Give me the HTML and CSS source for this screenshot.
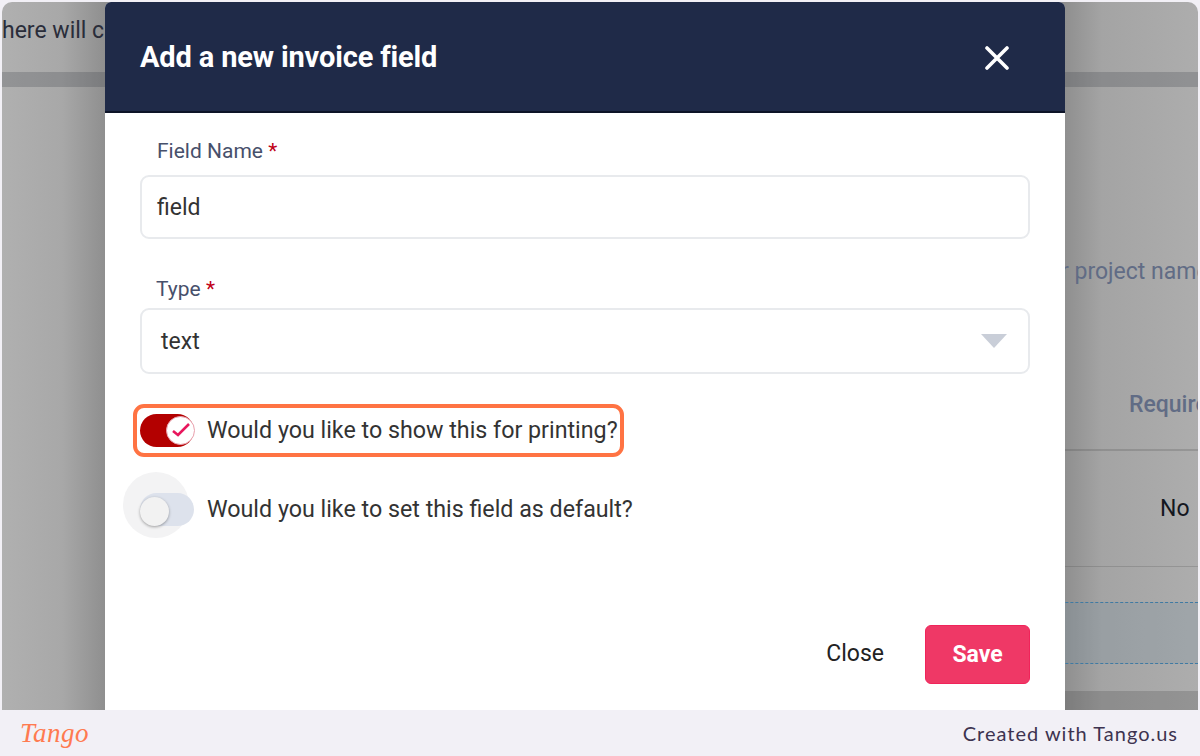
FILE: index.html
```html
<!DOCTYPE html>
<html lang="en">
<head>
    <meta charset="UTF-8">
    <title>Add a new invoice field</title>
    <link rel="stylesheet" href="styles.css">
</head>
<body>
    <div class="shot">
        <div class="page">
            <p class="page-intro">here will c</p>
            <div class="page-band"></div>
            <p class="page-project">r project name</p>
            <div class="page-head">Required</div>
            <div class="page-row"><span>No</span></div>
            <div class="page-drop"></div>
            <div class="page-end"></div>
        </div>

        <section class="modal">
            <header class="modal-header">
                <h2>Add a new invoice field</h2>
                <svg class="close-icon" viewBox="0 0 24 24" width="24" height="24">
                    <path d="M2 2 L22 22 M22 2 L2 22" />
                </svg>
            </header>

            <div class="modal-body">
                <label class="field-label">Field Name <span class="req">*</span></label>
                <div class="input">field</div>

                <label class="field-label type-label">Type <span class="req">*</span></label>
                <div class="input select">
                    <span>text</span>
                    <span class="caret"></span>
                </div>

                <div class="switch-row print-row">
                    <span class="switch on">
                        <span class="thumb">
                            <svg viewBox="0 0 24 24" width="24" height="24">
                                <path d="M4 13 L9 17 L20 6" />
                            </svg>
                        </span>
                    </span>
                    <span>Would you like to show this for printing?</span>
                    <span class="highlight"></span>
                </div>

                <div class="switch-row default-row">
                    <span class="switch">
                        <span class="halo"></span>
                        <span class="thumb"></span>
                    </span>
                    <span>Would you like to set this field as default?</span>
                </div>

                <div class="modal-actions">
                    <button class="btn-close">Close</button>
                    <button class="btn-save">Save</button>
                </div>
            </div>
        </section>
    </div>

    <footer class="tango-bar">
        <span class="tango-logo">Tango</span>
        <span class="tango-credit">Created with Tango.us</span>
    </footer>
</body>
</html>
```

FILE: styles.css
```css
* {
    box-sizing: border-box;
}

body {
    margin: 0;
    width: 1200px;
    height: 756px;
    overflow: hidden;
    background-color: #f2f0f6;
    font-family: Roboto, "Liberation Sans", sans-serif;
}

.shot {
    position: relative;
    height: 708px;
    margin: 2px 2px 0;
    border-radius: 10px 10px 0 0;
    overflow: hidden;
    background: linear-gradient(90deg, #b0b0b0 0, #a8a8a8 60px, #8f8f8f 103px, #8f8f8f 1063px, #a4a4a4 1100px, #adadad 1196px);
}

/* page behind the modal */
.page {
    height: 100%;
    display: flex;
    flex-direction: column;
}

.page-intro {
    margin: 0;
    height: 70px;
    padding-top: 15px;
    font-size: 23px;
    line-height: 28px;
    color: #2a2d3a;
    white-space: nowrap;
}

.page-band {
    height: 15px;
    background-color: rgba(60, 65, 70, 0.25);
}

.page-project {
    margin: 171px 0 0 1059px;
    height: 28px;
    font-size: 23px;
    line-height: 28px;
    color: #616c85;
    white-space: nowrap;
}

.page-head {
    margin: 105px 0 0 1127px;
    height: 58px;
    font-size: 23px;
    font-weight: 500;
    line-height: 28px;
    color: #616c85;
    white-space: nowrap;
}

/* the table only shows to the right of the modal */
.page-row {
    height: 118px;
    margin-left: 500px;
    border-top: 2px solid rgba(60, 60, 60, 0.2);
    border-bottom: 1px solid rgba(60, 60, 60, 0.2);
    padding: 44px 0 0 658px;
    font-size: 23px;
    line-height: 28px;
    color: #14171f;
}

.page-drop {
    height: 62px;
    margin: 35px 0 0 500px;
    background-color: rgba(120, 145, 160, 0.25);
    border-top: 1px dashed #3f7aa3;
    border-bottom: 1px dashed #3f7aa3;
}

.page-end {
    flex: 1;
    margin: 27px 0 0 500px;
    background-color: rgba(60, 60, 60, 0.22);
}

/* modal */
.modal {
    position: absolute;
    left: 103px;
    top: 0;
    width: 960px;
    height: 708px;
    background-color: #fff;
    border-radius: 6px 6px 0 0;
    overflow: hidden;
}

.modal-header {
    height: 111px;
    padding: 0 56px 0 35px;
    display: flex;
    align-items: center;
    justify-content: space-between;
    background-color: #1f2a48;
    border-bottom: 2px solid #0d1428;
    color: #fff;
}

.modal-header h2 {
    margin: 0;
    font-size: 29px;
    font-weight: 700;
    letter-spacing: -0.15px;
}

.close-icon {
    margin-top: 2px;
}

.close-icon path {
    fill: none;
    stroke: #fff;
    stroke-width: 3.6;
    stroke-linecap: round;
}

.modal-body {
    padding: 23px 35px 0;
}

.field-label {
    display: block;
    padding-left: 17px;
    height: 39px;
    font-size: 21px;
    line-height: 30px;
    color: #47506b;
}

.type-label {
    margin-top: 35px;
    padding-left: 16px;
    height: 34px;
}

.req {
    color: #c00018;
}

.input {
    height: 64px;
    padding: 0 15px;
    display: flex;
    align-items: center;
    border: 2px solid #e8eaed;
    border-radius: 9px;
    font-size: 23px;
    color: #333;
}

.select {
    height: 66px;
    padding: 0 21px 0 19px;
    justify-content: space-between;
}

.caret {
    width: 0;
    height: 0;
    border-left: 13px solid transparent;
    border-right: 13px solid transparent;
    border-top: 14px solid #c9ced8;
}

.switch-row {
    position: relative;
    display: flex;
    align-items: center;
    gap: 13px;
    font-size: 23.25px;
    color: #333;
    white-space: nowrap;
}

.print-row {
    margin-top: 39px;
    height: 34px;
}

.default-row {
    margin-top: 45px;
    height: 34px;
}

.switch {
    position: relative;
    flex: none;
    width: 54px;
    height: 33px;
    border-radius: 17px;
    background-color: #dde2ec;
}

.switch.on {
    background-color: #b30000;
}

.thumb {
    position: absolute;
    left: 0;
    top: 4px;
    width: 29px;
    height: 29px;
    border-radius: 50%;
    background-color: #f2f2f2;
    box-shadow: 0 1px 3px rgba(0, 0, 0, 0.35);
}

.switch.on .thumb {
    left: 26px;
    top: 2px;
    background-color: #fff;
    display: flex;
    align-items: center;
    justify-content: center;
    box-shadow: none;
    border: 1px solid #e9a0ad;
}

.thumb path {
    fill: none;
    stroke: #e8175d;
    stroke-width: 2.6;
}

.halo {
    position: absolute;
    left: -17px;
    top: -21px;
    width: 66px;
    height: 66px;
    border-radius: 50%;
    background-color: #f3f3f4;
}

.default-row .switch {
    background: none;
}

.default-row .switch::before {
    content: "";
    position: absolute;
    inset: 0;
    z-index: 1;
    border-radius: 17px;
    background-color: #dde2ec;
}

.default-row .thumb {
    z-index: 2;
}

.default-row > span:last-child {
    position: relative;
}

.highlight {
    position: absolute;
    left: -7px;
    top: -9px;
    width: 491px;
    height: 53px;
    border: 4px solid #ff7343;
    border-radius: 11px;
}

.modal-actions {
    margin-top: 99px;
    display: flex;
    justify-content: flex-end;
    align-items: center;
    gap: 41px;
}

.modal-actions button {
    font-family: inherit;
    border: 0;
    background: none;
    padding: 0;
    cursor: pointer;
}

.modal-actions .btn-close {
    margin-bottom: 2px;
    font-size: 23px;
    color: #222;
}

.modal-actions .btn-save {
    width: 105px;
    height: 59px;
    border-radius: 6px;
    background-color: #ef3866;
    border: 1px solid #f0245a;
    color: #fff;
    font-size: 23px;
    font-weight: 700;
}

/* tango footer */
.tango-bar {
    height: 46px;
    padding: 0 22px 0 20px;
    display: flex;
    align-items: center;
    justify-content: space-between;
    background-color: #f2f0f6;
    border-radius: 0 0 10px 10px;
}

.tango-logo {
    font-family: "Liberation Serif", serif;
    font-style: italic;
    font-size: 27px;
    color: #ff7a50;
    letter-spacing: 0.5px;
}

.tango-credit {
    font-family: Lato, sans-serif;
    font-size: 20px;
    color: #3d3350;
    letter-spacing: 1px;
}
```
